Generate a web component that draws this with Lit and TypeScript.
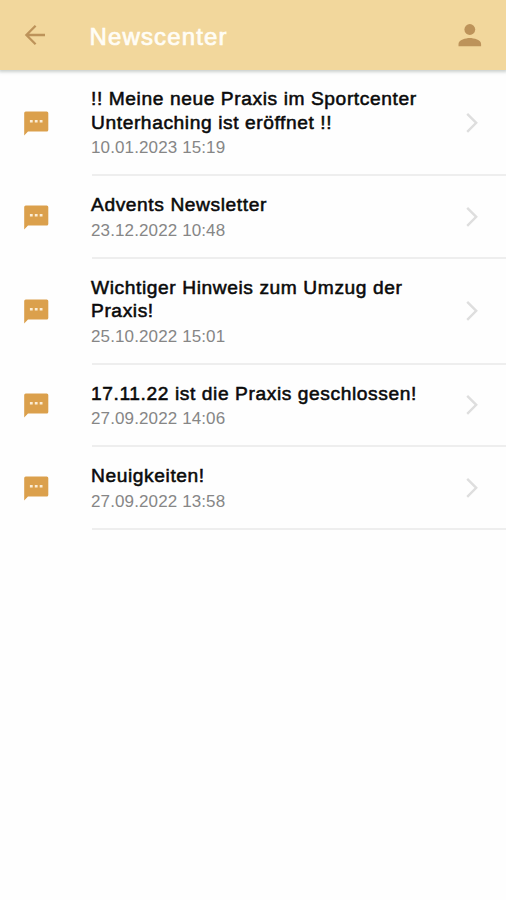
import { LitElement, html, css } from "lit";
import { customElement, property } from "lit/decorators.js";

interface NewsItem {
  lines: string[];
  date: string;
}

const NEWS: NewsItem[] = [
  { lines: ["!! Meine neue Praxis im Sportcenter", "Unterhaching ist eröffnet !!"], date: "10.01.2023 15:19" },
  { lines: ["Advents Newsletter"], date: "23.12.2022 10:48" },
  { lines: ["Wichtiger Hinweis zum Umzug der", "Praxis!"], date: "25.10.2022 15:01" },
  { lines: ["17.11.22 ist die Praxis geschlossen!"], date: "27.09.2022 14:06" },
  { lines: ["Neuigkeiten!"], date: "27.09.2022 13:58" },
];

@customElement("news-row")
export class NewsRow extends LitElement {
  @property({ attribute: false }) item!: NewsItem;

  static styles = css`
    :host {
      display: flex;
      padding-left: 23px;
    }
    .icon {
      flex: 0 0 69px;
      display: flex;
      align-items: center;
      padding-bottom: 1.3px;
      box-sizing: border-box;
    }
    .icon svg {
      display: block;
      width: 26px;
      height: 26px;
    }
    .body {
      flex: 1;
      display: flex;
      align-items: center;
      box-sizing: border-box;
      border-bottom: 2px solid #eeeeee;
      padding: 17.1px 27px 15.9px 0;
    }
    .text {
      flex: 1;
      margin-left: -1px;
      white-space: nowrap;
    }
    .title {
      font-size: 19.2px;
      line-height: 23.5px;
      letter-spacing: 0.59px;
      color: #0a0a0a;
      -webkit-text-stroke: 0.55px #0a0a0a;
    }
    .date {
      font-size: 17px;
      line-height: 24px;
      padding-top: 2.2px;
      margin-bottom: -2.2px;
      letter-spacing: 0.12px;
      color: #868686;
    }
    .chevron {
      display: block;
      width: 14px;
      height: 22px;
    }
  `;

  render() {
    return html`
      <div class="icon">
        <svg viewBox="0 0 26 26">
          <path d="M2.8 1.5H23.7a1.6 1.6 0 0 1 1.6 1.6V19.9a1.6 1.6 0 0 1-1.6 1.6H5L1.2 25.4V3.1a1.6 1.6 0 0 1 1.6-1.6z" fill="#dba04c" />
          <path d="M6.9 10h2.8v2.6H6.9zM11.8 10h2.8v2.6h-2.8zM16.7 10h2.8v2.6h-2.8z" fill="#fbedd5" />
        </svg>
      </div>
      <div class="body">
        <div class="text">
          ${this.item.lines.map((line) => html`<div class="title">${line}</div>`)}
          <div class="date">${this.item.date}</div>
        </div>
        <svg class="chevron" viewBox="0 0 14 22">
          <path d="M2.2 1.8l9 9-9 9" fill="none" stroke="#dedede" stroke-width="2.4" />
        </svg>
      </div>
    `;
  }
}

@customElement("app-root")
export class AppRoot extends LitElement {
  static styles = css`
    :host {
      display: block;
      height: 900px;
      overflow: hidden;
      background: #fefefe;
      font-family: "Liberation Sans", Arial, sans-serif;
    }
    .bar {
      position: relative;
      display: flex;
      align-items: center;
      box-sizing: border-box;
      height: 69.5px;
      padding: 0 22px 0 21px;
      background: #f2d79c;
      box-shadow: 0 1px 3px 1px rgba(110, 125, 120, 0.36);
    }
    .back,
    .user {
      display: block;
      width: 28px;
      height: 28px;
    }
    .heading {
      flex: 1;
      margin: 4px 0 0 40.5px;
      font-size: 24px;
      line-height: 28px;
      font-weight: 400;
      letter-spacing: 1.15px;
      color: #fffdf6;
      -webkit-text-stroke: 0.7px #fffdf6;
    }
    .list {
      padding-top: 0.7px;
    }
  `;

  render() {
    return html`
      <header class="bar">
        <svg class="back" viewBox="0 0 28 28">
          <path d="M24 14H6M14.6 4.8L5.4 14l9.2 9.2" fill="none" stroke="#bd935a" stroke-width="2.3" />
        </svg>
        <h1 class="heading">Newscenter</h1>
        <svg class="user" viewBox="0 0 28 28">
          <circle cx="13.8" cy="8.5" r="5.4" fill="#bd935a" />
          <path d="M2.5 25.3v-2.4c0-3.8 7.2-5.9 11.3-5.9s11.3 2.1 11.3 5.9v2.4z" fill="#bd935a" />
        </svg>
      </header>
      <main class="list">${NEWS.map((item) => html`<news-row .item=${item}></news-row>`)}</main>
    `;
  }
}
